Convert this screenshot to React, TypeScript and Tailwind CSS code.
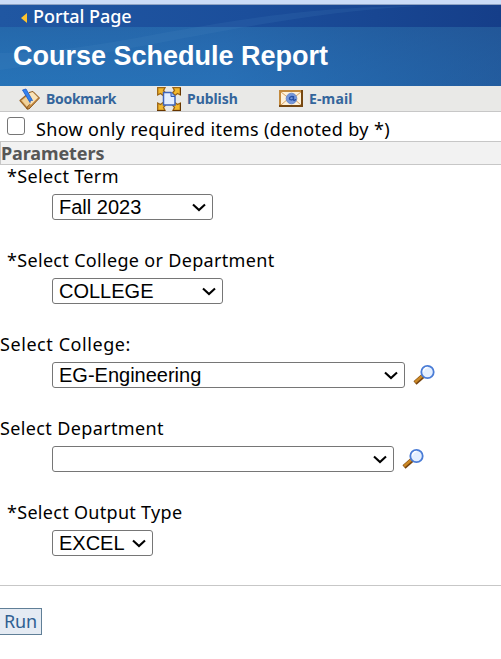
import React from "react";

const humanist = "font-['Trebuchet_MS','Noto_Sans',sans-serif]";
const arial = "font-['Liberation_Sans',Arial,sans-serif]";

function BookmarkIcon() {
  return (
    <svg width="22" height="22" viewBox="0 0 22 22" className="block shrink-0">
      <path d="M1 12.500 7.500 7l6 8.500-5 5.500Z" fill="#dcae69" stroke="#9c6526" strokeWidth="1.2" strokeLinejoin="round" />
      <path d="M10 4.500 14 3.500 20.500 10 10 21l-2.500-.5 3-5Z" fill="#c98c42" stroke="#8b5a22" strokeLinejoin="round" />
      <path d="m9.500 5.500 4-1.500 5.500 5.500-7.500 7.500Z" fill="#f9e3b8" />
      <path d="m3 12.500 5-4 4 6-4 4Z" fill="#f1d199" />
      <path d="m3.500 2 3.500-1 6.500 11.500-2-.3-.5 2.300Z" fill="#3382ee" stroke="#1b58c4" strokeWidth=".8" />
    </svg>
  );
}

function PublishIcon() {
  return (
    <svg width="24" height="24" viewBox="0 0 24 24" className="block shrink-0">
      <g fill="#f2b82d" stroke="#9b6414" strokeWidth="1.3">
        <path d="M.7.7h7.300L6.500 3.500 8.500 6 6 8.500 3.500 6.500.7 8Z" />
        <path d="M23.300.7v7.300l-2.800-1.500L18 8.500 15.500 6l2-2.500L16 .7Z" />
        <path d="M.7 23.300V16l2.800 1.500L6 15.500 8.500 18l-2 2.500L8 23.300Z" />
        <path d="M23.300 23.300H16l1.500-2.800-2-2.500 2.500-2.500 2.500 2 2.800-1.500Z" />
      </g>
      <path d="M0 23.500h8m8 0h8M23.500 1v7m0 8v7" stroke="#663500" />
      <path d="M6.500 5.500h7.500l4 4v8.500H6.500Z" fill="#e3eeff" stroke="#3d64bd" strokeWidth="1.5" />
      <path d="M14 5.500v4h4" fill="#9fbff4" stroke="#315bb5" />
    </svg>
  );
}

function MailIcon() {
  return (
    <svg width="24" height="17" viewBox="0 0 24 17" className="block shrink-0">
      <path d="M1 1h22v15H1Z" fill="#fff1d9" stroke="#c2893c" strokeWidth="2" />
      <path d="M23 0v16H0" fill="none" stroke="#764711" strokeWidth="2" />
      <path d="m2 2 10 8L22 2M2 15l8-7m12 7-8-7" fill="none" stroke="#d5a262" />
      <circle cx="12.500" cy="8.500" r="5.300" fill="#7697da" stroke="#6c8bcb" />
      <path d="M14.500 7.500c-1-2-4-.8-4 1s3 2 4 0V6v4c1 1 2 0 2-1" fill="none" stroke="#2750a5" strokeWidth="1.4" />
    </svg>
  );
}

function SearchIcon() {
  return (
    <svg width="22" height="22" viewBox="0 0 22 22" className="ml-[8px] block shrink-0">
      <path d="m2 19 8-7" stroke="#76430e" strokeWidth="4.6" />
      <path d="m2 18.200 8-7" stroke="#cc8926" strokeWidth="2.500" />
      <circle cx="14.5" cy="8" r="6.200" fill="#e4efff" stroke="#4a7cd6" strokeWidth="1.8" />
      <path d="M10.500 7.500a4 4 0 0 1 4-4" fill="none" stroke="#fff" strokeWidth="1.5" />
    </svg>
  );
}

type FieldProps = { label: string; value: string; width: string; labelClass: string; search?: boolean };

function Field({ label, value, width, labelClass, search }: FieldProps) {
  return (
    <div className="h-[84px]">
      <div className={`h-[29px] whitespace-nowrap text-[18px] leading-[23px] ${labelClass}`}>{label}</div>
      <div className="flex h-[26px] items-center pl-[52px]">
        <button className={`${width} ${arial} flex h-[26px] shrink-0 items-center justify-between rounded-[3px] border border-[#767676] bg-white px-[6px] text-[20px] leading-6`}>
          <span>{value}</span>
          <svg width="14" height="9" viewBox="0 0 14 9" className="block shrink-0">
            <path d="m1 1.500 6 5.500 6-5.500" fill="none" stroke="#000" strokeWidth="2.1" />
          </svg>
        </button>
        {search && <SearchIcon />}
      </div>
    </div>
  );
}

export default function App() {
  return (
    <div className={`${humanist} h-[659px] w-[501px] overflow-hidden bg-white text-black`}>
      <div className="h-[5px] border-b border-[#8fa3c3] bg-[#cbdcf7]" />
      <header className="relative h-[81px] text-white">
        <svg className="absolute inset-0" width="501" height="81" viewBox="0 0 501 81">
          <defs>
            <linearGradient id="sky" x1="0" x2="1">
              <stop offset="0" stopColor="#2670b4" />
              <stop offset=".45" stopColor="#286cb3" />
              <stop offset=".75" stopColor="#225b9f" />
              <stop offset="1" stopColor="#204d8e" />
            </linearGradient>
            <linearGradient id="top" x1="0" x2="1">
              <stop offset="0" stopColor="#2057a2" />
              <stop offset=".5" stopColor="#1b4e9b" />
              <stop offset="1" stopColor="#153e89" />
            </linearGradient>
            <linearGradient id="base" x1="0" x2="0" y1="0" y2="1">
              <stop offset="0" stopColor="#2460a2" stopOpacity=".5" />
              <stop offset="1" stopColor="#2878bd" stopOpacity=".35" />
            </linearGradient>
          </defs>
          <path d="M0 0h501v81H0Z" fill="url(#sky)" />
          <path d="M0 22h501v59H0Z" fill="url(#base)" />
          <path d="M0 0h501v22H0Z" fill="url(#top)" />
          <path d="M0 48C120 48 220 2 420 1 280 8 160 42 0 65Z" fill="#5495cc" opacity=".13" />
        </svg>
        <div className="relative">
          <div className="flex h-[22px] items-center pl-[21px]">
            <svg width="6" height="10" viewBox="0 0 6 10" className="mt-[3px]"><path d="M6 0v10L0 5Z" fill="#ffc42e" /></svg>
            <span className="ml-[6px] whitespace-nowrap text-[18px] font-medium leading-[22px] tracking-[-0.050px]">Portal Page</span>
          </div>
          <h1 className={`${arial} ml-[13px] mt-[12px] whitespace-nowrap text-[27px] font-bold leading-[34px]`}>Course Schedule Report</h1>
        </div>
      </header>
      <nav className="flex h-[26px] items-center border-b border-[#c7c7c7] bg-[#e9e9e7] text-[14px] font-bold leading-6 text-[#34659b]">
        <div className="ml-[19px] flex w-[138px] items-center"><BookmarkIcon /><span className="ml-[5px] tracking-[-0.300px]">Bookmark</span></div>
        <div className="flex w-[122px] items-center"><PublishIcon /><span className="ml-[6px] tracking-[-0.050px]">Publish</span></div>
        <div className="flex items-center"><MailIcon /><span className="ml-[6px] tracking-[0.150px]">E-mail</span></div>
      </nav>
      <div className="flex h-[29px] items-start pl-[7px] pt-[5px]">
        <div role="checkbox" aria-checked="false" className="size-[18px] shrink-0 rounded-[3px] border-[1.5px] border-[#767676] bg-white" />
        <span className="ml-[11px] whitespace-nowrap text-[18px] leading-[24px] tracking-[0.350px]">Show only required items (denoted by *)</span>
      </div>
      <div className="h-[24px] border border-r-0 border-[#c7c7c7] bg-[#f2f2f2] text-[18px] font-bold leading-[23px] tracking-[-0.100px] text-[#575757]">Parameters</div>
      <main className="h-[421px] border-b border-[#c7c7c7]">
        <Field label="*Select Term" value="Fall 2023" width="w-[161px]" labelClass="pl-[7px] tracking-[0.340px]" />
        <Field label="*Select College or Department" value="COLLEGE" width="w-[171px]" labelClass="pl-[7px] tracking-[0.320px]" />
        <Field label="Select College:" value="EG-Engineering" width="w-[353px]" labelClass="tracking-[0.570px]" search />
        <Field label="Select Department" value="" width="w-[342px]" labelClass="tracking-[0.370px]" search />
        <Field label="*Select Output Type" value="EXCEL" width="w-[101px]" labelClass="pl-[7px] tracking-[0.300px]" />
      </main>
      <button className="mt-[22px] block h-[27px] w-[42px] border border-l-0 border-[#607f97] bg-[#e5ebf3] text-[18px] leading-[25px] tracking-[-0.200px] text-[#2f6092]">Run</button>
    </div>
  );
}
